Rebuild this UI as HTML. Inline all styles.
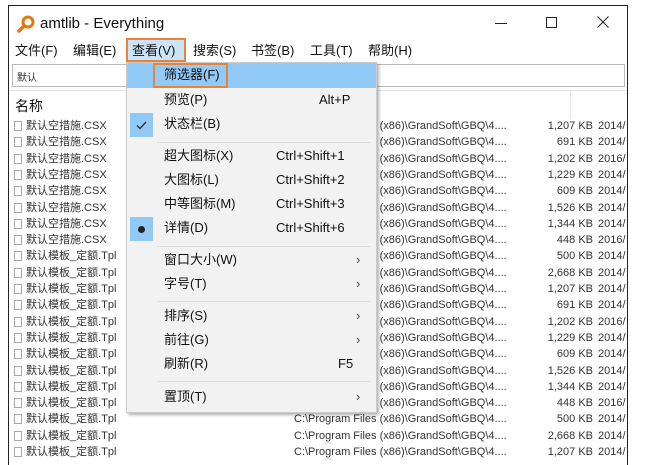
<!DOCTYPE html>
<html><head><meta charset="utf-8"><style>
*{margin:0;padding:0;box-sizing:border-box}
body{width:656px;height:457px;background:#fff;position:relative;overflow:hidden;font-family:"Liberation Sans","Noto Sans CJK SC",sans-serif;color:#111}
.a{position:absolute;white-space:nowrap}
#win{position:absolute;left:8px;top:5px;width:620px;height:460px;border:1px solid #222;border-bottom:none;background:#fff;overflow:hidden}
.mb{font-size:13px}
.row{position:absolute;left:0;width:620px;height:16px;font-size:11px;color:#333;line-height:16px}
.fi{position:absolute;left:5px;top:3px;width:8px;height:10px;border:1px solid #aaa;background:#fff}
#menu{position:absolute;left:126px;top:62px;width:251px;height:351px;background:#f2f2f2;border:1px solid #ccc;box-shadow:2px 2px 3px rgba(0,0,0,.3);font-size:13px}
.mi{position:absolute;left:37px;line-height:16px}
.sc{position:absolute;left:149px;line-height:16px}
.ar{position:absolute;left:229px;line-height:16px;color:#444}
.sep{position:absolute;left:30px;width:214px;height:1px;background:#dcdcdc}
</style></head><body>
<div id="win">
 <svg class="a" style="left:8px;top:9px" width="18" height="18" viewBox="0 0 18 18"><circle cx="11" cy="7" r="5" fill="none" stroke="#e07a10" stroke-width="3"/><line x1="7" y1="11" x2="2" y2="16" stroke="#e07a10" stroke-width="3.5" stroke-linecap="round"/></svg>
 <div class="a" style="left:31px;top:9px;font-size:15px">amtlib - Everything</div>
 <div class="a" style="left:486px;top:17px;width:12px;height:1px;background:#222"></div>
 <div class="a" style="left:537px;top:11px;width:11px;height:11px;border:1px solid #222"></div>
 <svg class="a" style="left:588px;top:10px" width="12" height="12" viewBox="0 0 12 12"><path d="M0.5 0.5L11.5 11.5M11.5 0.5L0.5 11.5" stroke="#222" stroke-width="1.1"/></svg>
 <div class="a mb" style="left:6px;top:34px">文件(F)</div>
 <div class="a mb" style="left:64px;top:34px">编辑(E)</div>
 <div class="a" style="left:117px;top:32px;width:60px;height:24px;border:2px solid #e8833a;background:#cce4f7"></div>
 <div class="a mb" style="left:123px;top:34px">查看(V)</div>
 <div class="a mb" style="left:184px;top:34px">搜索(S)</div>
 <div class="a mb" style="left:242px;top:34px">书签(B)</div>
 <div class="a mb" style="left:301px;top:34px">工具(T)</div>
 <div class="a mb" style="left:359px;top:34px">帮助(H)</div>
 <div class="a" style="left:3px;top:58px;width:613px;height:23px;border:1px solid #bbb;font-size:10px;padding:4px 0 0 4px;color:#333">默认</div>
 <div class="a" style="left:0;top:84px;width:620px;height:1px;background:#e5e5e5"></div>
 <div class="a" style="left:6px;top:90px;font-size:14px">名称</div>
 <div class="a" style="left:561px;top:85px;width:1px;height:28px;background:#e5e5e5"></div>
 <div id="rows"></div>
</div>
<div id="menu">
 <div class="a" style="left:0;top:0;width:249px;height:25px;background:#91c9f7"></div>
 <div class="a" style="left:26px;top:0;width:75px;height:25px;border:2px solid #e8833a"></div>
 <div class="mi" style="top:4px">筛选器(F)</div>
 <div class="mi" style="top:29px">预览(P)</div><div class="a" style="left:192px;top:29px;line-height:16px">Alt+P</div>
 <div class="a" style="left:3px;top:50px;width:23px;height:24px;background:#91c9f7"><svg style="position:absolute;left:6px;top:8px" width="11" height="9" viewBox="0 0 11 9"><path d="M1 4.5L4 7.5L10 1" fill="none" stroke="#333" stroke-width="1.4"/></svg></div>
 <div class="mi" style="top:53px">状态栏(B)</div>
 <div class="sep" style="top:79px"></div>
 <div class="mi" style="top:85px">超大图标(X)</div><div class="sc" style="top:85px">Ctrl+Shift+1</div>
 <div class="mi" style="top:109px">大图标(L)</div><div class="sc" style="top:109px">Ctrl+Shift+2</div>
 <div class="mi" style="top:133px">中等图标(M)</div><div class="sc" style="top:133px">Ctrl+Shift+3</div>
 <div class="a" style="left:3px;top:154px;width:23px;height:24px;background:#91c9f7"><div style="margin:9px 0 0 8px;width:7px;height:7px;border-radius:50%;background:#222"></div></div>
 <div class="mi" style="top:157px">详情(D)</div><div class="sc" style="top:157px">Ctrl+Shift+6</div>
 <div class="sep" style="top:183px"></div>
 <div class="mi" style="top:189px">窗口大小(W)</div><div class="ar" style="top:189px">›</div>
 <div class="mi" style="top:213px">字号(T)</div><div class="ar" style="top:213px">›</div>
 <div class="sep" style="top:238px"></div>
 <div class="mi" style="top:245px">排序(S)</div><div class="ar" style="top:245px">›</div>
 <div class="mi" style="top:269px">前往(G)</div><div class="ar" style="top:269px">›</div>
 <div class="mi" style="top:293px">刷新(R)</div><div class="a" style="left:211px;top:293px;line-height:16px">F5</div>
 <div class="sep" style="top:318px"></div>
 <div class="mi" style="top:326px">置顶(T)</div><div class="ar" style="top:326px">›</div>
</div>
<script>
var s=[1207,691,1202,1229,609,1526,1344,448,500,2668,1207,691,1202,1229,609,1526,1344,448,500,2668,1207];
var d=[2014,2014,2016,2014,2014,2014,2014,2016,2014,2014,2014,2014,2016,2014,2014,2014,2014,2016,2014,2014,2014];
var h='';
for(var i=0;i<21;i++){
 var y=112+i*16.3;
 var n=i<8?'默认空措施.CSX':'默认模板_定额.Tpl';
 var sz=s[i]>=1000?Math.floor(s[i]/1000)+','+String(s[i]%1000).padStart(3,'0'):s[i];
 h+='<div class="row" style="top:'+y+'px"><div class="fi"></div><span class="a" style="left:17px">'+n+'</span><span class="a" style="left:285px">C:\\Program Files (x86)\\GrandSoft\\GBQ\\4....</span><span class="a" style="right:36px">'+sz+' KB</span><span class="a" style="left:589px">'+d[i]+'/</span></div>';
}
document.getElementById('rows').innerHTML=h;
</script>
</body></html>
